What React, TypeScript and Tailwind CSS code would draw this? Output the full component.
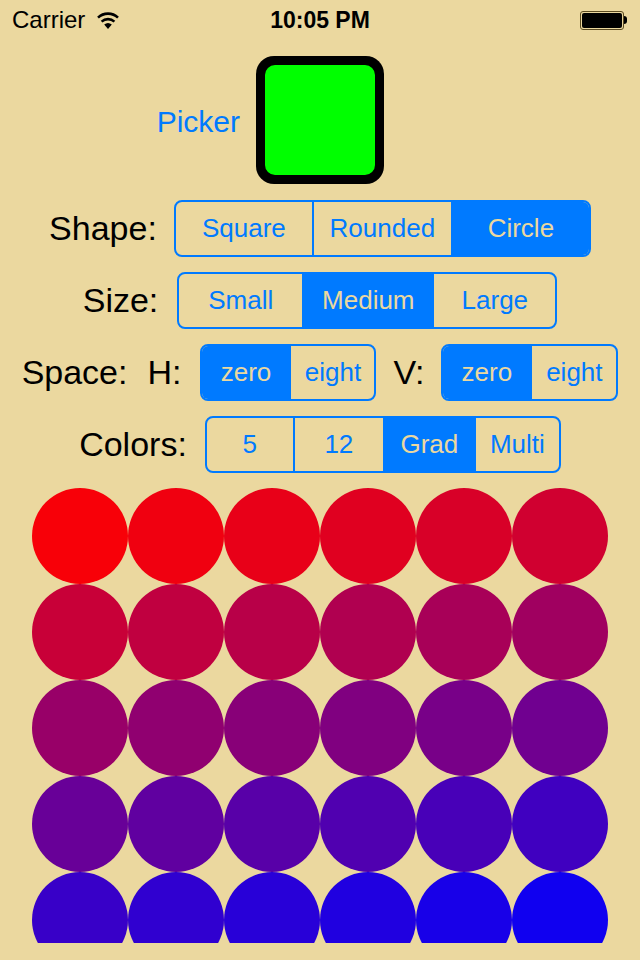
import React from 'react';

type SegProps = {
  items: { label: string; w: number }[];
  selected: number;
};

// segmented control, iOS 7 style (widths include outer border)
const Segmented: React.FC<SegProps> = ({ items, selected }) => (
  <div className="flex h-[57px] rounded-lg border-2 border-[#007aff] overflow-hidden">
    {items.map((item, i) => (
      <div
        key={item.label}
        className={`flex items-center justify-center text-[26px] ${
          i === selected ? 'bg-[#007aff] text-[#ebd89f]' : 'text-[#007aff]'
        } ${i > 0 ? 'border-l-2 border-[#007aff]' : ''}`}
        style={{ width: item.w - (i === 0 || i === items.length - 1 ? 2 : 0) }}
      >
        {item.label}
      </div>
    ))}
  </div>
);

const Wifi = () => (
  <svg width="26" height="20" viewBox="0 0 26 20" className="ml-[10px]">
    <path d="M13 19 L9.2 14.6 A6 6 0 0 1 16.8 14.6 Z" fill="#000" />
    <path d="M6.6 11.6 A9.6 9.6 0 0 1 19.4 11.6" stroke="#000" strokeWidth="2.6" fill="none" />
    <path d="M3 7.6 A14.6 14.6 0 0 1 23 7.6" stroke="#000" strokeWidth="2.6" fill="none" />
  </svg>
);

const Battery = () => (
  <div className="flex items-center">
    <div className="w-[44px] h-[19px] rounded-[3px] border border-[#5a4a20] p-[1px]">
      <div className="w-full h-full rounded-[2px] bg-black" />
    </div>
    <div className="w-[3px] h-[8px] bg-black rounded-r-sm" />
  </div>
);

export default function App() {
  const circles = Array.from({ length: 30 }, (_, i) => {
    const r = 248 - i * 8;
    const b = 8 + i * 8;
    return `rgb(${r},0,${b})`;
  });

  return (
    <div
      className="w-[640px] h-[960px] bg-[#ebd89f] flex flex-col items-center overflow-hidden"
      style={{ fontFamily: '"Liberation Sans", Arial, sans-serif' }}
    >
      {/* status bar */}
      <div className="w-full h-10 flex items-center justify-between px-3 relative">
        <div className="flex items-center text-[24px] text-black">
          Carrier
          <Wifi />
        </div>
        <div className="absolute left-0 right-0 text-center text-[23px] font-bold text-black">10:05 PM</div>
        <div className="pr-[1px]">
          <Battery />
        </div>
      </div>

      {/* picker */}
      <div className="w-full mt-4 grid grid-cols-[1fr_auto_1fr] items-center">
        <div className="justify-self-end mr-[16px] text-[30px] text-[#007aff] mt-[2px]">Picker</div>
        <div className="w-[128px] h-[128px] rounded-[18px] bg-black p-[9px]">
          <div className="w-full h-full rounded-[10px] bg-[#00ff00]" />
        </div>
        <div />
      </div>

      <div className="mt-4 flex items-center gap-[17px]">
        <span className="text-[34px] text-black">Shape:</span>
        <Segmented
          items={[
            { label: 'Square', w: 138 },
            { label: 'Rounded', w: 139 },
            { label: 'Circle', w: 140 },
          ]}
          selected={2}
        />
      </div>

      <div className="mt-[15px] flex items-center gap-[19px]">
        <span className="text-[34px] text-black">Size:</span>
        <Segmented
          items={[
            { label: 'Small', w: 125 },
            { label: 'Medium', w: 130 },
            { label: 'Large', w: 125 },
          ]}
          selected={1}
        />
      </div>

      <div className="mt-[15px] flex items-center">
        <span className="text-[34px] text-black">Space:</span>
        <span className="text-[34px] text-black ml-[20px]">H:</span>
        <div className="ml-[19px]">
          <Segmented
            items={[
              { label: 'zero', w: 89 },
              { label: 'eight', w: 87 },
            ]}
            selected={0}
          />
        </div>
        <span className="text-[34px] text-black ml-[17px]">V:</span>
        <div className="ml-[17px]">
          <Segmented
            items={[
              { label: 'zero', w: 89 },
              { label: 'eight', w: 88 },
            ]}
            selected={0}
          />
        </div>
      </div>

      <div className="mt-[15px] flex items-center gap-[18px]">
        <span className="text-[34px] text-black">Colors:</span>
        <Segmented
          items={[
            { label: '5', w: 88 },
            { label: '12', w: 90 },
            { label: 'Grad', w: 91 },
            { label: 'Multi', w: 87 },
          ]}
          selected={2}
        />
      </div>

      {/* circle grid */}
      <div className="mt-[15px] w-[576px] h-[455px] overflow-hidden grid grid-cols-6 content-start">
        {circles.map((c, i) => (
          <div key={i} className="w-[96px] h-[96px] rounded-full" style={{ backgroundColor: c }} />
        ))}
      </div>
    </div>
  );
}
